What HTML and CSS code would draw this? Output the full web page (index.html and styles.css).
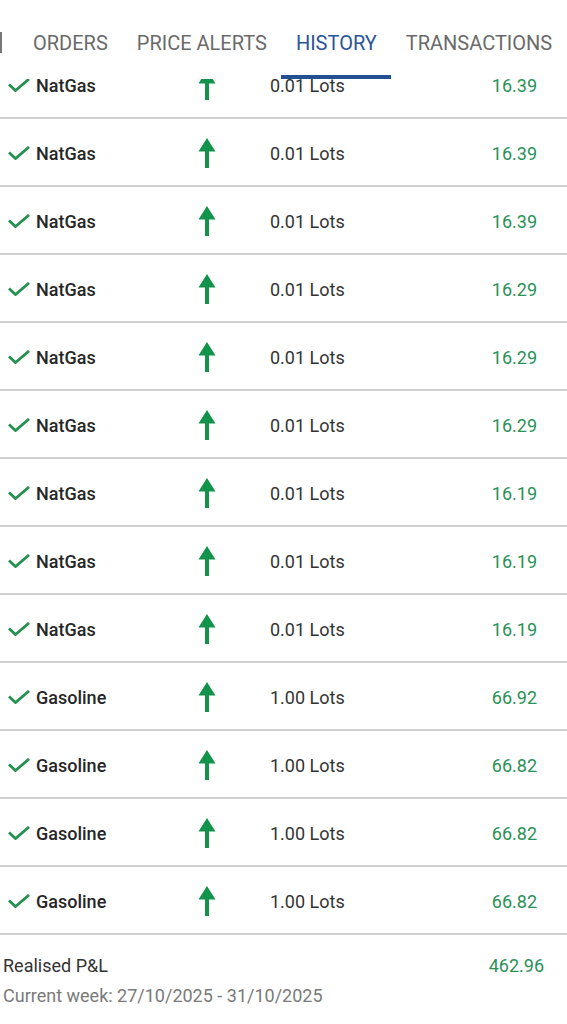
FILE: index.html
```html
<!DOCTYPE html>
<html lang="en">
<head>
  <meta charset="UTF-8">
  <title>History</title>
  <link rel="stylesheet" href="styles.css">
</head>
<body>

  <div class="tabs">
    <span class="tab-edge"></span>
    <span class="tab first">ORDERS</span>
    <span class="tab">PRICE ALERTS</span>
    <span class="tab active">HISTORY</span>
    <span class="tab">TRANSACTIONS</span>
  </div>

  <div class="list" id="list"></div>

  <div class="summary">
    <div class="summary-row">
      <span>Realised P&amp;L</span>
      <span class="profit">462.96</span>
    </div>
    <div class="week">Current week: 27/10/2025 - 31/10/2025</div>
  </div>

  <script>
    // closed deals for the week
    const deals = [
      ['NatGas', '0.01', '16.39'],
      ['NatGas', '0.01', '16.39'],
      ['NatGas', '0.01', '16.39'],
      ['NatGas', '0.01', '16.29'],
      ['NatGas', '0.01', '16.29'],
      ['NatGas', '0.01', '16.29'],
      ['NatGas', '0.01', '16.19'],
      ['NatGas', '0.01', '16.19'],
      ['NatGas', '0.01', '16.19'],
      ['Gasoline', '1.00', '66.92'],
      ['Gasoline', '1.00', '66.82'],
      ['Gasoline', '1.00', '66.82'],
      ['Gasoline', '1.00', '66.82']
    ];

    const check = '<svg width="22" height="14" viewBox="0 0 22 14"><polyline points="1,6.5 7.5,12.5 21,1" fill="none" stroke="#25904f" stroke-width="2.8"/></svg>';
    const arrow = '<svg width="18" height="30" viewBox="0 0 18 30"><polygon points="9,0 17.5,13.5 0.5,13.5" fill="#12924a"/><rect x="7" y="12" width="4" height="18" fill="#12924a"/></svg>';

    const list = document.getElementById('list');
    list.innerHTML = deals.map(d => `
      <div class="row">
        <span class="check">${check}</span>
        <span class="name">${d[0]}</span>
        <span class="dir">${arrow}</span>
        <span class="lots">${d[1]} Lots</span>
        <span class="profit">${d[2]}</span>
      </div>`).join('');
  </script>

</body>
</html>
```

FILE: styles.css
```css
body {
  margin: 0;
  font-family: Roboto, "Noto Sans", sans-serif;
  background: #fff;
  color: #2b2b2b;
  position: relative;
}
.tabs {
  position: absolute;
  top: 0;
  left: 0;
  right: 0;
  height: 79px;
  background: #fff;
  display: flex;
  align-items: flex-start;
  padding-top: 29px;
  box-sizing: border-box;
  z-index: 2;
}
.tab-edge {
  width: 2px;
  height: 21px;
  margin-top: 3px;
  background: #777;
}
.tab {
  font-size: 20px;
  color: #6a6a6a;
  padding: 0 14.5px;
  height: 50px;
  box-sizing: border-box;
  line-height: 28px;
  white-space: nowrap;
}
.tab.first {
  padding-left: 31px;
}
.tab.active {
  color: #2a5599;
  border-bottom: 4px solid #234f93;
}
.list {
  padding-top: 51px;
}
.row {
  display: grid;
  grid-template-columns: 28px 162px 72px 1fr auto;
  align-items: center;
  height: 68px;
  padding: 2px 30px 0 8px;
  border-bottom: 2px solid #cfcfcf;
  box-sizing: border-box;
  font-size: 18px;
}
.check svg, .dir svg {
  display: block;
}
.name {
  font-weight: 500;
  color: #262626;
}
.lots {
  color: #333;
}
.profit {
  color: #2a9157;
}
.summary {
  padding: 16px 23px 0 3px;
  font-size: 18px;
}
.summary-row {
  display: flex;
  justify-content: space-between;
  color: #333;
  line-height: 30px;
}
.week {
  color: #7a7a7a;
  line-height: 30px;
}
```
